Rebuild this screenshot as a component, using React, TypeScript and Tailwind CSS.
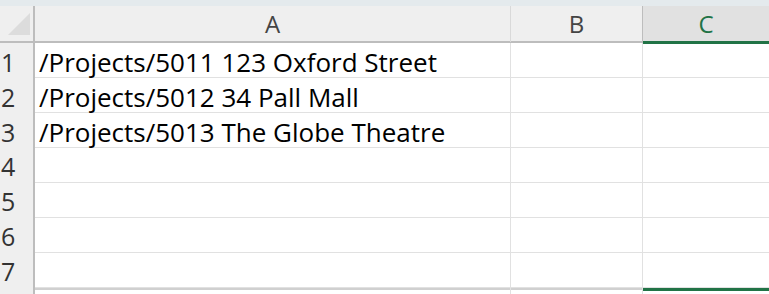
import React from "react";

const rows = [
  "/Projects/5011 123 Oxford Street",
  "/Projects/5012 34 Pall Mall",
  "/Projects/5013 The Globe Theatre",
  "",
  "",
  "",
  "",
];

export default function App() {
  return (
    <div
      className="w-[769px] h-[294px] overflow-hidden bg-white"
      style={{ fontFamily: '"Open Sans", "Liberation Sans", sans-serif' }}
    >
      <div className="h-[6px] bg-[#e4eaed]" />
      <div className="grid grid-cols-[35px_476px_132px_1fr] h-[37px] bg-[#efefef] border-b-2 border-[#bdbdbd]">
        <div className="relative border-r-2 border-[#bdbdbd]">
          <svg className="absolute left-[8px] top-[7px]" width="22" height="22" viewBox="0 0 22 22">
            <polygon points="22,0 22,22 0,22" fill="#dcdcdc" />
          </svg>
        </div>
        <div className="flex items-center justify-center border-r border-[#d9d9d9] text-[24px] text-[#444]">A</div>
        <div className="flex items-center justify-center border-r border-[#bdbdbd] text-[24px] text-[#444]">B</div>
        <div className="relative flex items-center justify-center bg-[#e1e1e1] text-[24px] text-[#217346]">
          C
          <div className="absolute left-0 right-0 bottom-[-2px] h-[3px] bg-[#217346]" />
        </div>
      </div>
      {rows.map((t, i) => (
        <div key={i} className="grid grid-cols-[35px_476px_132px_1fr] h-[35px] border-b border-[#e1e1e1]">
          <div className="flex items-center pl-[1px] pb-[2px] bg-[#efefef] border-r-2 border-[#bdbdbd] text-[25px] text-[#333]">{i + 1}</div>
          <div className="flex items-center pl-[4px] pb-[3px] border-r border-[#e1e1e1] text-[26px] text-black whitespace-nowrap">{t}</div>
          <div className="border-r border-[#e1e1e1]" />
          <div />
        </div>
      ))}
      <div className="grid grid-cols-[35px_476px_132px_1fr] h-[10px] border-t-2 border-[#d0d0d0]">
        <div className="bg-[#efefef] border-r-2 border-[#bdbdbd]" />
        <div className="border-r border-[#e1e1e1]" />
        <div className="border-r border-[#e1e1e1]" />
        <div className="relative">
          <div className="absolute left-0 right-0 top-[-2px] h-[3px] bg-[#217346]" />
        </div>
      </div>
    </div>
  );
}
